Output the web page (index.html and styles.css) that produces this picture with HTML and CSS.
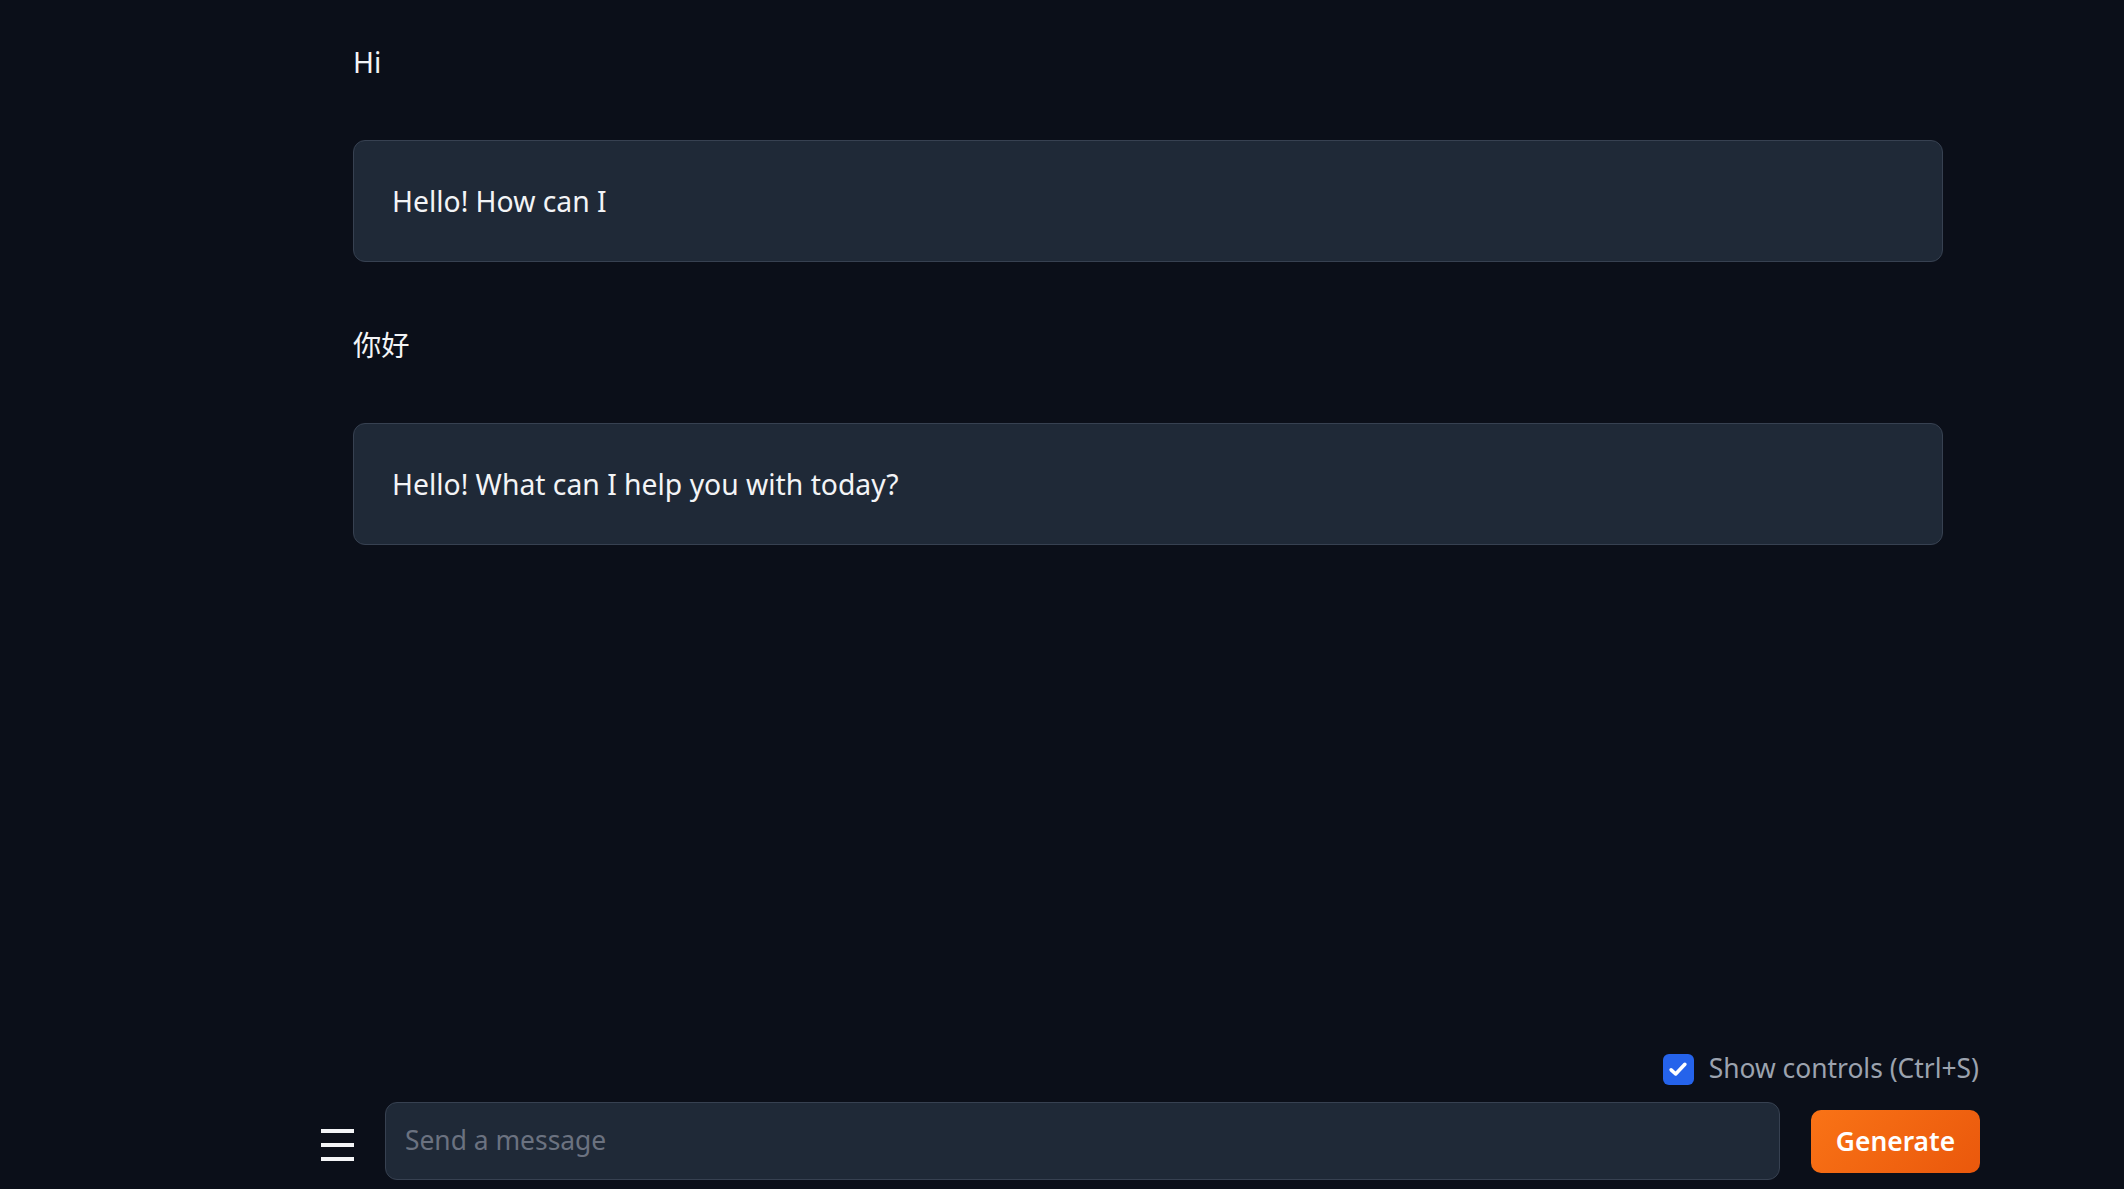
FILE: index.html
```html
<!DOCTYPE html>
<html lang="en">
<head>
<meta charset="utf-8">
<title>Chat</title>
<link rel="stylesheet" href="styles.css">
</head>
<body>
<div class="app">
  <main class="chat">
    <div class="msg user">Hi</div>
    <div class="msg bot">Hello! How can I</div>
    <div class="msg user">你好</div>
    <div class="msg bot">Hello! What can I help you with today?</div>
  </main>
  <footer class="composer">
    <div class="controls-row">
      <label class="toggle">
        <span class="check">
          <svg viewBox="0 0 16 16" width="22" height="22"><path d="M3 8.6 L6.3 11.6 L13 4.6" fill="none" stroke="#fff" stroke-width="2.6" stroke-linecap="round" stroke-linejoin="round"/></svg>
        </span>
        <span class="toggle-text">Show controls (Ctrl+S)</span>
      </label>
    </div>
    <div class="input-row">
      <button class="menu" aria-label="menu"><span></span><span></span><span></span></button>
      <div class="input"><span class="placeholder">Send a message</span></div>
      <button class="generate">Generate</button>
    </div>
  </footer>
</div>
</body>
</html>
```
FILE: styles.css
```css
html, body {
  margin: 0;
  padding: 0;
  background: #0b0f19;
}
body {
  font-family: "Noto Sans", "Noto Sans CJK SC", sans-serif;
  font-size: 28.3px;
  line-height: 42px;
  color: #f3f4f6;
}
.app {
  height: 100vh;
  display: flex;
  flex-direction: column;
  box-sizing: border-box;
}
.chat {
  flex: 1;
  display: flex;
  flex-direction: column;
  gap: 57px;
  padding: 36px 0 0 353px;
  width: 1590px;
}
.msg.user {
  padding-top: 5px;
}
.msg.bot {
  background: #1f2937;
  border: 1px solid #374151;
  border-radius: 12px;
  padding: 39px 38px;
}
.composer {
  padding: 0 144px 9px 321px;
  display: flex;
  flex-direction: column;
  gap: 13px;
  font-size: 26.4px;
  line-height: 1.5;
}
.controls-row {
  display: flex;
  justify-content: flex-end;
  padding-right: 1px;
}
.toggle {
  display: flex;
  align-items: center;
  gap: 15px;
  color: #9ca3af;
}
.check {
  width: 31px;
  height: 31px;
  border-radius: 6px;
  background: #2563eb;
  display: flex;
  align-items: center;
  justify-content: center;
}
.input-row {
  display: flex;
  align-items: center;
  gap: 31px;
}
.menu {
  width: 33px;
  height: 36px;
  padding: 0;
  margin-top: 8px;
  border: 0;
  background: transparent;
  display: flex;
  flex-direction: column;
  justify-content: center;
  gap: 10px;
}
.menu span {
  display: block;
  height: 4px;
  width: 33px;
  background: #f3f4f6;
}
.input {
  flex: 1;
  height: 78px;
  box-sizing: border-box;
  background: #1f2937;
  border: 1px solid #374151;
  border-radius: 12px;
  padding: 0 19px;
  display: flex;
  align-items: center;
}
.placeholder {
  color: #6b7280;
}
.generate {
  width: 169px;
  height: 63px;
  border: 0;
  border-radius: 10px;
  background: linear-gradient(135deg, #f97316, #ea580c);
  color: #fff;
  font-family: "Noto Sans", sans-serif;
  font-weight: 600;
  font-size: 26.4px;
  padding: 0;
}
```
